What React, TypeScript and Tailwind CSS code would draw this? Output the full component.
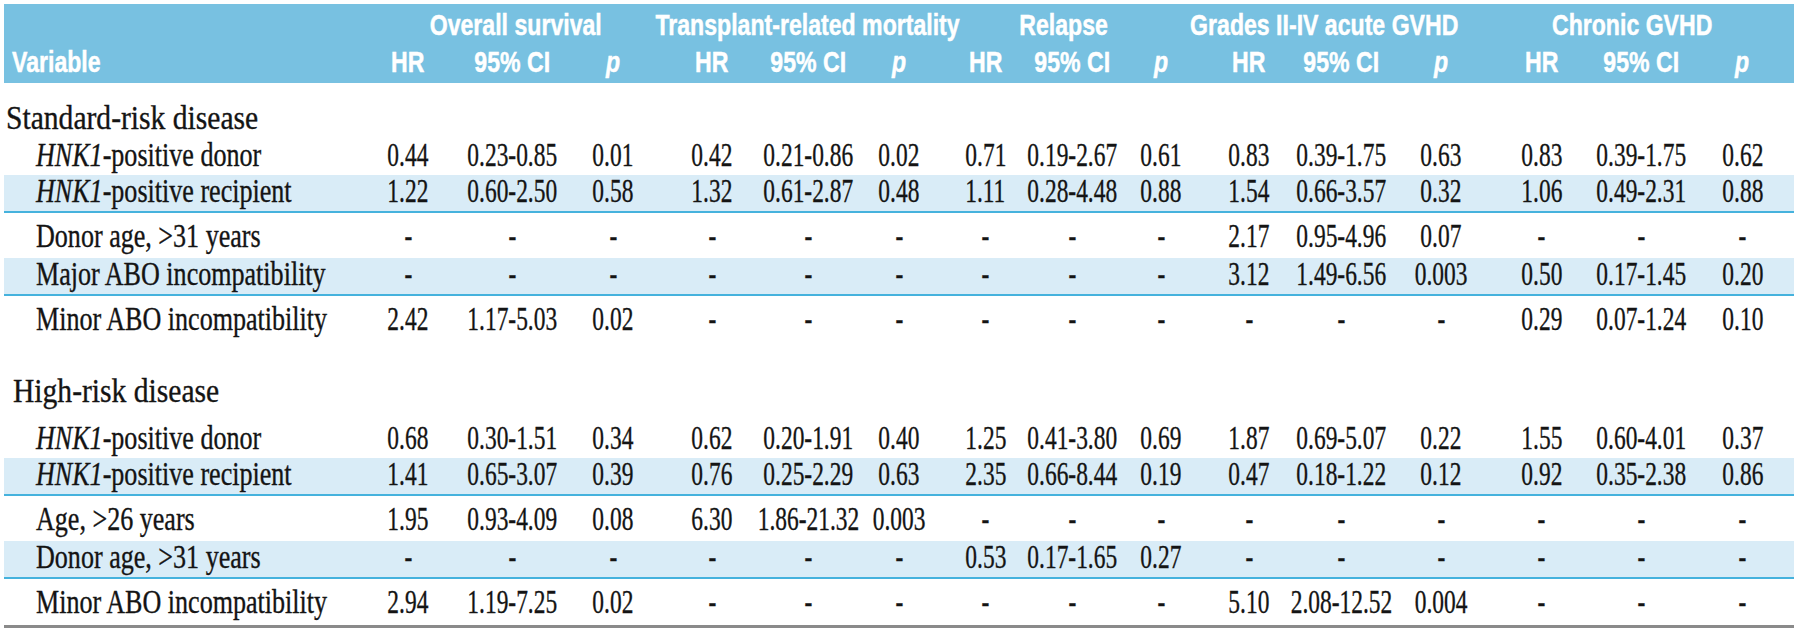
import React from "react";

// column grid shared by the header and every body row
const COLS =
  "grid grid-cols-[351px_106px_102px_100px_98px_94px_88px_85px_89px_88px_88px_97px_102px_99px_100px_103px]";

type RowKind = "plain" | "shaded" | "afterLine" | "last";

type Row = {
  label: React.ReactNode;
  vals: string[];
  kind: RowKind;
};

const D = ["-", "-", "-"];

const hnkDonor = (
  <>
    <i>HNK1</i>-positive donor
  </>
);
const hnkRecipient = (
  <>
    <i>HNK1</i>-positive recipient
  </>
);

const standardRows: Row[] = [
  {
    label: hnkDonor,
    kind: "plain",
    vals: ["0.44", "0.23-0.85", "0.01", "0.42", "0.21-0.86", "0.02", "0.71", "0.19-2.67", "0.61", "0.83", "0.39-1.75", "0.63", "0.83", "0.39-1.75", "0.62"],
  },
  {
    label: hnkRecipient,
    kind: "shaded",
    vals: ["1.22", "0.60-2.50", "0.58", "1.32", "0.61-2.87", "0.48", "1.11", "0.28-4.48", "0.88", "1.54", "0.66-3.57", "0.32", "1.06", "0.49-2.31", "0.88"],
  },
  {
    label: "Donor age, >31 years",
    kind: "afterLine",
    vals: [...D, ...D, ...D, "2.17", "0.95-4.96", "0.07", ...D],
  },
  {
    label: "Major ABO incompatibility",
    kind: "shaded",
    vals: [...D, ...D, ...D, "3.12", "1.49-6.56", "0.003", "0.50", "0.17-1.45", "0.20"],
  },
  {
    label: "Minor ABO incompatibility",
    kind: "afterLine",
    vals: ["2.42", "1.17-5.03", "0.02", ...D, ...D, ...D, "0.29", "0.07-1.24", "0.10"],
  },
];

const highRows: Row[] = [
  {
    label: hnkDonor,
    kind: "plain",
    vals: ["0.68", "0.30-1.51", "0.34", "0.62", "0.20-1.91", "0.40", "1.25", "0.41-3.80", "0.69", "1.87", "0.69-5.07", "0.22", "1.55", "0.60-4.01", "0.37"],
  },
  {
    label: hnkRecipient,
    kind: "shaded",
    vals: ["1.41", "0.65-3.07", "0.39", "0.76", "0.25-2.29", "0.63", "2.35", "0.66-8.44", "0.19", "0.47", "0.18-1.22", "0.12", "0.92", "0.35-2.38", "0.86"],
  },
  {
    label: "Age, >26 years",
    kind: "afterLine",
    vals: ["1.95", "0.93-4.09", "0.08", "6.30", "1.86-21.32", "0.003", ...D, ...D, ...D],
  },
  {
    label: "Donor age, >31 years",
    kind: "shaded",
    vals: [...D, ...D, "0.53", "0.17-1.65", "0.27", ...D, ...D],
  },
  {
    label: "Minor ABO incompatibility",
    kind: "last",
    vals: ["2.94", "1.19-7.25", "0.02", ...D, ...D, "5.10", "2.08-12.52", "0.004", ...D],
  },
];

const rowClass: Record<RowKind, string> = {
  plain: "pb-[3px]",
  shaded: "pb-[3px] bg-[#d9ecf7] border-b-2 border-[#45b2dd]",
  afterLine: "pt-[7px] pb-[5px]",
  last: "pt-[7px] pb-[6px] border-b-[3px] border-[#8a8a8a]",
};

function BodyRow({ row }: { row: Row }) {
  return (
    <div className={`${COLS} leading-[33px] ${rowClass[row.kind]}`}>
      <div className="pl-[32px] whitespace-nowrap">
        <span className="inline-block origin-left scale-x-[0.79]">{row.label}</span>
      </div>
      {row.vals.map((v, i) => (
        <div key={i} className="flex justify-center whitespace-nowrap">
          <span className="inline-block scale-x-[0.71]">{v}</span>
        </div>
      ))}
    </div>
  );
}

function HeadCell({ children }: { children: React.ReactNode }) {
  return (
    <div className="flex justify-center whitespace-nowrap">
      <span className="inline-block scale-x-[0.77]">{children}</span>
    </div>
  );
}

export default function App() {
  const groups = [
    { title: "Overall survival", cls: "w-[322px]" },
    { title: "Transplant-related mortality", cls: "w-[262px]" },
    { title: "Relapse", cls: "w-[250px]" },
    { title: "Grades II-IV acute GVHD", cls: "w-[270px]" },
    { title: "Chronic GVHD", cls: "w-[334px] pl-3" },
  ];

  return (
    <div className="min-h-[644px] bg-white pt-[4px] pl-[4px]">
      <div className="w-[1790px] text-[#141414]">
        {/* Header band */}
        <div className="bg-[#78c1e1] text-white font-bold text-[30px] font-['Liberation_Sans',Arial,sans-serif] [-webkit-text-stroke:0.5px_#ffffff]">
          <div className="flex pt-[3px] leading-[36px]">
            <div className="w-[351px] shrink-0" />
            {groups.map((g) => (
              <div key={g.title} className={`${g.cls} shrink-0 flex justify-center whitespace-nowrap`}>
                <span className="inline-block scale-x-[0.77]">{g.title}</span>
              </div>
            ))}
          </div>
          <div className={`${COLS} pt-[1px] pb-[3px] leading-[36px]`}>
            <div className="pl-[8px] whitespace-nowrap">
              <span className="inline-block origin-left scale-x-[0.77]">Variable</span>
            </div>
            {groups.map((g) => (
              <React.Fragment key={g.title}>
                <HeadCell>HR</HeadCell>
                <HeadCell>95% CI</HeadCell>
                <HeadCell>
                  <i>p</i>
                </HeadCell>
              </React.Fragment>
            ))}
          </div>
        </div>

        {/* Body */}
        <div className="text-[33px] font-['Liberation_Serif','Times_New_Roman',serif] [-webkit-text-stroke:0.35px_#141414]">
          <div className="pt-[18px] pb-[5px] pl-[2px] text-[34px] leading-[33px] whitespace-nowrap">
            <span className="inline-block origin-left scale-x-[0.87]">Standard-risk disease</span>
          </div>
          {standardRows.map((r, i) => (
            <BodyRow key={"s" + i} row={r} />
          ))}

          <div className="pt-[33px] pb-[15px] pl-[9px] text-[34px] leading-[33px] whitespace-nowrap">
            <span className="inline-block origin-left scale-x-[0.87]">High-risk disease</span>
          </div>
          {highRows.map((r, i) => (
            <BodyRow key={"h" + i} row={r} />
          ))}
        </div>
      </div>
    </div>
  );
}
